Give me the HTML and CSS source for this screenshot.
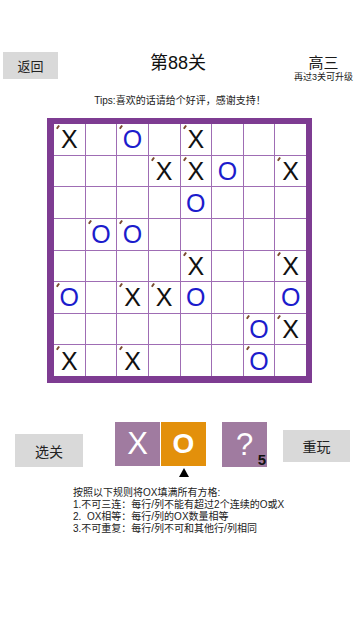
FILE: index.html
```html
<!DOCTYPE html>
<html>
<head>
<meta charset="utf-8">
<link rel="stylesheet" href="styles.css">
</head>
<body>
<div class="page">
  <div class="top">
    <div class="btn back">返回</div>
    <div class="title">第88关</div>
    <div class="grade">
      <div class="grade-name">高三</div>
      <div class="grade-sub">再过3关可升级</div>
    </div>
  </div>
  <div class="tips">Tips:喜欢的话请给个好评，感谢支持！</div>
  <div class="board">
    <div class="cell x fixed">X</div><div class="cell"></div><div class="cell o fixed">O</div><div class="cell"></div><div class="cell x fixed">X</div><div class="cell"></div><div class="cell"></div><div class="cell"></div>
    <div class="cell"></div><div class="cell"></div><div class="cell"></div><div class="cell x fixed">X</div><div class="cell x fixed">X</div><div class="cell o">O</div><div class="cell"></div><div class="cell x fixed">X</div>
    <div class="cell"></div><div class="cell"></div><div class="cell"></div><div class="cell"></div><div class="cell o">O</div><div class="cell"></div><div class="cell"></div><div class="cell"></div>
    <div class="cell"></div><div class="cell o fixed">O</div><div class="cell o fixed">O</div><div class="cell"></div><div class="cell"></div><div class="cell"></div><div class="cell"></div><div class="cell"></div>
    <div class="cell"></div><div class="cell"></div><div class="cell"></div><div class="cell"></div><div class="cell x fixed">X</div><div class="cell"></div><div class="cell"></div><div class="cell x fixed">X</div>
    <div class="cell o fixed">O</div><div class="cell"></div><div class="cell x fixed">X</div><div class="cell x fixed">X</div><div class="cell o">O</div><div class="cell"></div><div class="cell"></div><div class="cell o">O</div>
    <div class="cell"></div><div class="cell"></div><div class="cell"></div><div class="cell"></div><div class="cell"></div><div class="cell"></div><div class="cell o fixed">O</div><div class="cell x fixed">X</div>
    <div class="cell x fixed">X</div><div class="cell"></div><div class="cell x fixed">X</div><div class="cell"></div><div class="cell"></div><div class="cell"></div><div class="cell o fixed">O</div><div class="cell"></div>
  </div>
  <div class="controls">
    <div class="btn select">选关</div>
    <div class="picker">
      <div class="tile tile-x">X</div>
      <div class="picked">
        <div class="tile tile-o">O</div>
        <div class="arrow"></div>
      </div>
    </div>
    <div class="tile tile-hint">?<span class="hint-count">5</span></div>
    <div class="btn replay">重玩</div>
  </div>
  <div class="rules">
    <div>按照以下规则将OX填满所有方格:</div>
    <div>1.不可三连：每行/列不能有超过2个连续的O或X</div>
    <div>2.&nbsp; OX相等：每行/列的OX数量相等</div>
    <div>3.不可重复：每行/列不可和其他行/列相同</div>
  </div>
</div>
</body>
</html>
```

FILE: styles.css
```css
html, body {
  margin: 0;
  padding: 0;
  background: #ffffff;
}
.page {
  width: 360px;
  height: 640px;
  font-family: "Liberation Sans", "Noto Sans CJK SC", sans-serif;
  color: #1a1a1a;
}
.top {
  display: grid;
  grid-template-columns: 1fr auto 1fr;
  align-items: start;
  padding: 52px 7px 0 3px;
}
.btn {
  background: #d9d9d9;
  display: flex;
  align-items: center;
  justify-content: center;
  font-size: 14px;
  color: #222;
}
.back {
  width: 55px;
  height: 27px;
  font-size: 13px;
  justify-self: start;
}
.title {
  font-size: 18px;
  line-height: 22px;
  color: #111;
}
.grade {
  justify-self: end;
  text-align: center;
  height: 30px;
}
.grade-name {
  font-size: 15px;
  line-height: 19px;
  padding-top: 1px;
}
.grade-sub {
  font-size: 9px;
  line-height: 10px;
}
.tips {
  margin-top: 12px;
  text-align: center;
  font-size: 10px;
  line-height: 14px;
}
.board {
  margin: 10px 0 0 47px;
  width: 265px;
  height: 265px;
  box-sizing: border-box;
  border: 7px solid #7e3c92;
  border-top-width: 6px;
  border-right-width: 6px;
  background: #9f6db4;
  display: grid;
  grid-template-columns: repeat(8, 1fr);
  grid-template-rows: repeat(8, 1fr);
  gap: 1px;
}
.cell {
  background: #ffffff;
  position: relative;
  display: flex;
  align-items: center;
  justify-content: center;
  font-size: 25px;
  line-height: 1;
  padding-top: 1px;
}
.cell.x { color: #111; }
.cell.o { color: #1c1ccc; }
.cell.fixed::before {
  content: "";
  position: absolute;
  left: 3px;
  top: 1px;
  width: 1.5px;
  height: 4px;
  background: #7a4a2e;
  transform: rotate(35deg);
}
.controls {
  margin-top: 39px;
  display: flex;
  align-items: flex-start;
}
.select {
  margin: 12px 0 0 15px;
  width: 68px;
  height: 33px;
}
.picker {
  display: flex;
  gap: 1px;
  margin-left: 32px;
}
.picked {
  display: flex;
  flex-direction: column;
  align-items: center;
}
.tile {
  width: 45px;
  height: 44px;
  display: flex;
  align-items: center;
  justify-content: center;
  color: #ffffff;
  font-size: 31px;
  background: #a07ba0;
  position: relative;
}
.tile-o {
  background: #e3900b;
  font-weight: bold;
  font-size: 28px;
}
.arrow {
  margin-top: 2px;
  width: 0;
  height: 0;
  border-left: 5px solid transparent;
  border-right: 5px solid transparent;
  border-bottom: 9px solid #000;
}
.tile-hint {
  margin-left: 16px;
  height: 45px;
}
.hint-count {
  position: absolute;
  right: 1px;
  bottom: 0;
  font-size: 15px;
  font-weight: bold;
  color: #111;
  line-height: 1;
}
.replay {
  margin: 8px 0 0 16px;
  width: 67px;
  height: 32px;
}
.rules {
  margin: 10px 0 0 73px;
  font-size: 10px;
  line-height: 12px;
  color: #222;
}
```
